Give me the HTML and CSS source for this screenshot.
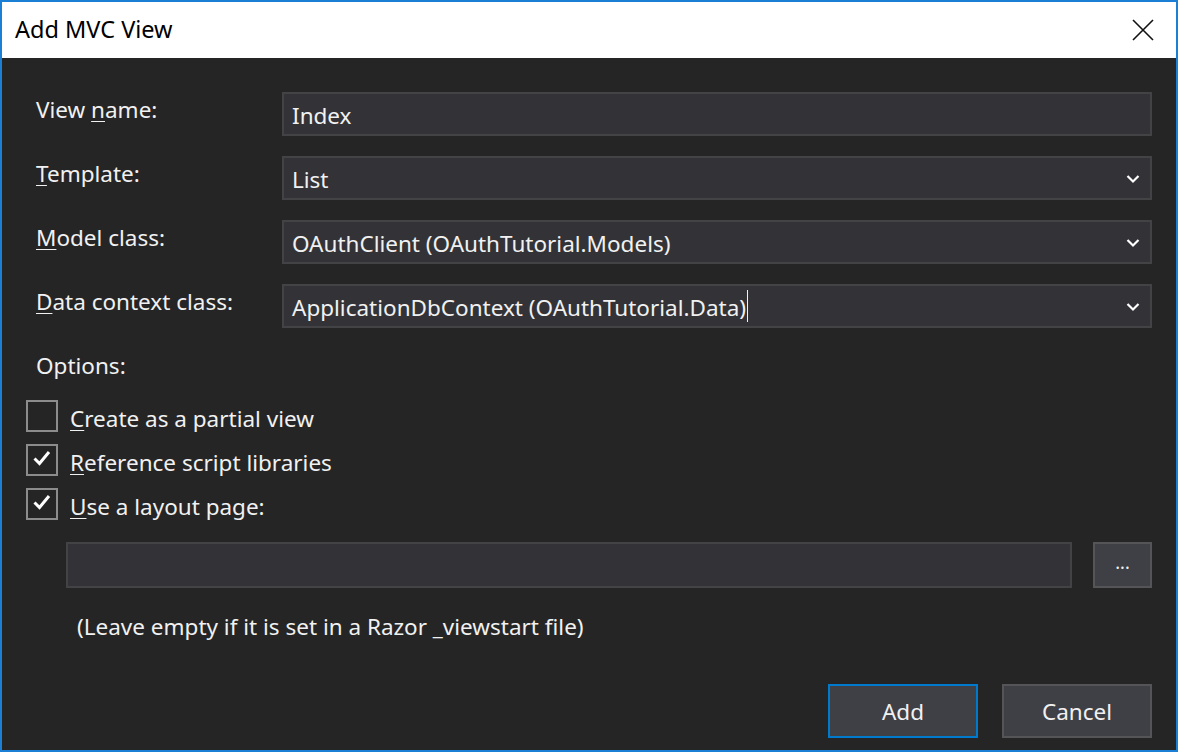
FILE: index.html
```html
<!DOCTYPE html>
<html>
<head>
<meta charset="utf-8">
<link rel="stylesheet" href="styles.css">
</head>
<body>
<div class="window">
  <div class="titlebar">
    <span class="title">Add MVC View</span>
    <svg class="close" width="22" height="22" viewBox="0 0 22 22"><path d="M1 1 L21 21 M21 1 L1 21" stroke="#111" stroke-width="1.6" fill="none"/></svg>
  </div>
  <div class="content">
    <div class="form">
      <label class="lbl"><span>View <u>n</u>ame:</span></label>
      <div class="field"><span>Index</span></div>
      <label class="lbl"><span><u>T</u>emplate:</span></label>
      <div class="field select"><span>List</span><svg class="chev" width="14" height="10" viewBox="0 0 14 10"><path d="M1.5 2 L7 7.5 L12.5 2" stroke="#fff" stroke-width="2.2" fill="none"/></svg></div>
      <label class="lbl"><span><u>M</u>odel class:</span></label>
      <div class="field select"><span>OAuthClient (OAuthTutorial.Models)</span><svg class="chev" width="14" height="10" viewBox="0 0 14 10"><path d="M1.5 2 L7 7.5 L12.5 2" stroke="#fff" stroke-width="2.2" fill="none"/></svg></div>
      <label class="lbl"><span><u>D</u>ata context class:</span></label>
      <div class="field select"><span>ApplicationDbContext (OAuthTutorial.Data)<i class="caret"></i></span><svg class="chev" width="14" height="10" viewBox="0 0 14 10"><path d="M1.5 2 L7 7.5 L12.5 2" stroke="#fff" stroke-width="2.2" fill="none"/></svg></div>
    </div>
    <div class="options">Options:</div>
    <div class="checks">
      <div class="check"><span class="box"></span><span><u>C</u>reate as a partial view</span></div>
      <div class="check"><span class="box"><svg width="20" height="18" viewBox="0 0 20 18"><path d="M2.5 9.5 L7.5 14.5 L17 3" stroke="#fff" stroke-width="3" fill="none"/></svg></span><span><u>R</u>eference script libraries</span></div>
      <div class="check"><span class="box"><svg width="20" height="18" viewBox="0 0 20 18"><path d="M2.5 9.5 L7.5 14.5 L17 3" stroke="#fff" stroke-width="3" fill="none"/></svg></span><span><u>U</u>se a layout page:</span></div>
    </div>
    <div class="layout-row">
      <div class="field wide"></div>
      <button class="btn browse">...</button>
    </div>
    <div class="hint">(Leave empty if it is set in a Razor _viewstart file)</div>
    <div class="actions">
      <button class="btn action primary">Add</button>
      <button class="btn action">Cancel</button>
    </div>
  </div>
</div>
</body>
</html>
```

FILE: styles.css
```css
* { box-sizing: border-box; }
html, body { margin: 0; padding: 0; }
body {
  font-family: "Noto Sans", "Open Sans", sans-serif;
  font-size: 22.5px;
  background: #252526;
}
.window {
  width: 1178px;
  height: 752px;
  border: 2px solid #1c7fd6;
  display: flex;
  flex-direction: column;
  background: #252526;
}
.titlebar {
  height: 56px;
  background: #fff;
  display: flex;
  align-items: center;
  justify-content: space-between;
  padding: 0 22px 0 13px;
  flex: none;
}
.title {
  color: #000;
  font-size: 23.5px;
  padding-bottom: 2px;
}
.content {
  flex: 1;
  display: flex;
  flex-direction: column;
  padding: 34px 24px 12px 24px;
  color: #f1f1f1;
}
.form {
  display: grid;
  grid-template-columns: 246px 1fr;
  row-gap: 20px;
  padding-left: 10px;
}
.lbl {
  display: flex;
  align-items: center;
  height: 44px;
  padding-bottom: 10px;
  white-space: nowrap;
}
u { text-underline-offset: 3px; text-decoration-thickness: 1px; }
.field {
  height: 44px;
  background: #333337;
  border: 2px solid #434346;
  display: flex;
  align-items: center;
  padding: 2px 8px 0 8px;
  justify-content: space-between;
  white-space: nowrap;
}
.chev { margin-right: 2px; }
.caret {
  display: inline-block;
  width: 1px;
  height: 32px;
  background: #f1f1f1;
  vertical-align: 0;
  margin: -6px 0 -6px 1px;
}
.options {
  margin-top: 24px;
  padding-left: 10px;
  height: 28px;
  line-height: 28px;
}
.checks {
  margin-top: 20px;
  display: flex;
  flex-direction: column;
  gap: 12px;
}
.check {
  display: flex;
  align-items: center;
  gap: 12px;
  height: 32px;
}
.check > span:last-child { padding-top: 4px; }
.box {
  width: 32px;
  height: 32px;
  border: 2px solid #8c8c8c;
  display: flex;
  align-items: center;
  justify-content: center;
  padding-bottom: 4px;
}
.layout-row {
  margin-top: 22px;
  margin-left: 40px;
  display: flex;
  gap: 21px;
  height: 46px;
}
.field.wide { flex: 1; height: 46px; }
.btn {
  font-family: inherit;
  font-size: 22.5px;
  color: #f1f1f1;
  background: #3f3f46;
  border: 2px solid #555558;
  padding: 0;
}
.browse {
  width: 59px;
  height: 46px;
  padding-bottom: 6px;
  font-size: 18px;
}
.hint {
  margin-top: 25px;
  padding-left: 51px;
  height: 28px;
  line-height: 28px;
}
.actions {
  margin-top: auto;
  display: flex;
  justify-content: flex-end;
  gap: 24px;
}
.action {
  width: 150px;
  height: 54px;
}
.primary { border-color: #007acc; }
```
